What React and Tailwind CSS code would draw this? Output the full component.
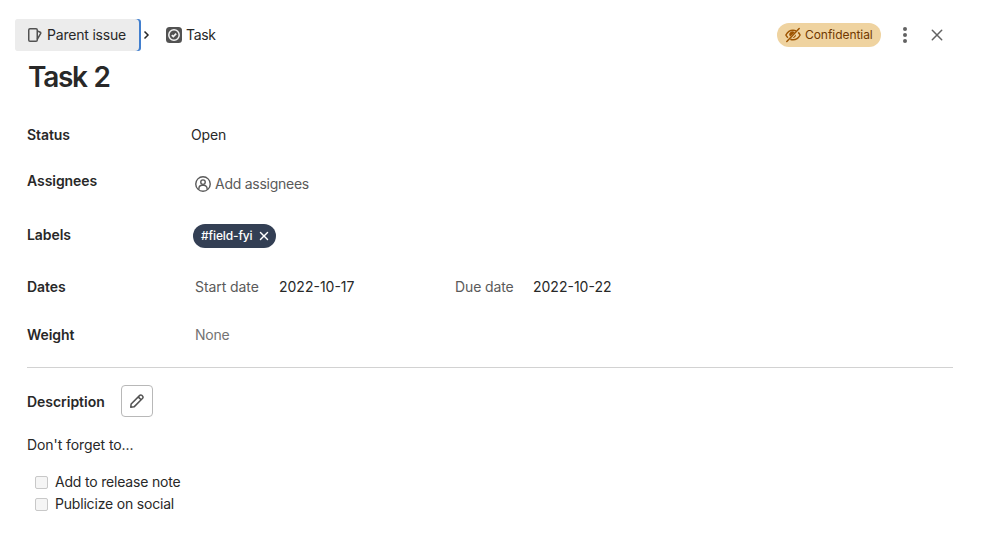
import React from 'react';

function Icon({ children, size = 16, className = '' }) {
  return (
    <svg
      width={size}
      height={size}
      viewBox="0 0 16 16"
      fill="none"
      stroke="currentColor"
      strokeWidth="1.5"
      className={`shrink-0 ${className}`}
      aria-hidden="true"
    >
      {children}
    </svg>
  );
}

function IssueIcon() {
  return (
    <Icon className="text-[#525252]">
      <rect x="1.75" y="1.75" width="8.5" height="12.5" rx="1.25" />
      <path d="M10.25 3.9l3 1.35a.9.9 0 0 1 .45 1.2L10.25 12.3" />
    </Icon>
  );
}

function TaskIcon() {
  return (
    <Icon className="text-[#f4f4f4]">
      <rect width="16" height="16" rx="3.5" fill="#525252" stroke="none" />
      <circle cx="8" cy="8" r="5.2" strokeWidth="1.5" />
      <path d="M5.8 8.2l1.5 1.4 2.9-3" strokeWidth="1.7" />
    </Icon>
  );
}

function EyeSlashIcon() {
  return (
    <Icon>
      <path d="M14.2 1.6L1.8 14.4" strokeLinecap="round" />
      <path d="M11 3.9C10.1 3.4 9.1 3.2 8 3.2 4.6 3.2 2.2 5.5 .9 8c.5 1 1.2 1.9 2 2.7M13.2 5.4c.8.8 1.4 1.7 1.9 2.6-1.3 2.5-3.7 4.8-7.1 4.8-1 0-1.9-.2-2.7-.5" />
      <path d="M5.2 9.6A3 3 0 0 1 9.6 5.4zM10.95 7.5A3 3 0 0 1 7.6 10.95z" fill="currentColor" stroke="none" />
    </Icon>
  );
}

function UserIcon() {
  return (
    <Icon>
      <circle cx="8" cy="8" r="7.25" strokeWidth="1.4" />
      <circle cx="8" cy="6.1" r="2.25" strokeWidth="1.4" />
      <path d="M3.9 13.6v-1.1a3.3 3.3 0 0 1 3.3-3.3h1.6a3.3 3.3 0 0 1 3.3 3.3v1.1" strokeWidth="1.4" />
    </Icon>
  );
}

function PencilIcon() {
  return (
    <Icon className="text-[#525252]">
      <path d="M1.75 14.25l.4-3.3 8.6-8.6a1.4 1.4 0 0 1 2 0l.9.9a1.4 1.4 0 0 1 0 2l-8.6 8.6zM9.2 3.9l2.9 2.9" strokeLinejoin="round" />
    </Icon>
  );
}

function Cross({ size, className, weight = 1.5 }) {
  return (
    <Icon size={size} className={className}>
      <path d="M3.3 3.3l9.4 9.4M12.7 3.3L3.3 12.7" strokeLinecap="round" strokeWidth={weight} />
    </Icon>
  );
}

function Row({ label, className, labelClass = '', children }) {
  return (
    <div className={`flex ${className}`}>
      <div className={`w-[164px] shrink-0 font-semibold tracking-[-0.06px] ${labelClass}`}>{label}</div>
      {children}
    </div>
  );
}

function Todo({ children }) {
  return (
    <li className="flex h-[22px] items-center gap-[7px]">
      <span className="size-[13px] rounded-[2px] border border-[#c8c8c8] bg-[#f5f5f5]" />
      <span className="tracking-[-0.19px]">{children}</span>
    </li>
  );
}

export default function App() {
  return (
    <main className="h-[544px] w-[982px] overflow-hidden bg-white pt-[19px] pr-[29px] pl-[27px] font-['Inter',sans-serif] text-sm leading-5 text-[#282828]">
      <header className="-ml-3 flex h-8 items-center">
        <div className="h-8 w-[126px] rounded-[3px] bg-[linear-gradient(90deg,#ececec_50%,#427fce_50%)]">
          <a className="flex h-8 w-[124px] items-center gap-1 rounded-[4px] bg-[#ececec] pl-3">
            <IssueIcon />
            <span className="whitespace-nowrap tracking-[-0.2px]">Parent issue</span>
          </a>
        </div>
        <svg width="8" height="10" viewBox="0 0 8 10" fill="none" stroke="#282828" strokeWidth="1.5" className="ml-[2px]">
          <path d="M1.5 1.5L5 5 1.5 8.5" />
        </svg>
        <div className="ml-[15px] flex items-center gap-1">
          <TaskIcon />
          <span className="tracking-[-0.3px]">Task</span>
        </div>
        <div className="ml-auto flex items-center">
          <span className="flex h-6 w-[104px] items-center gap-1 rounded-full bg-[#efd3a0] pl-2 text-xs text-[#703800]">
            <span className="text-[#9e5400]"><EyeSlashIcon /></span>
            <span className="tracking-[-0.05px]">Confidential</span>
          </span>
          <svg width="16" height="16" viewBox="0 0 16 16" fill="#626262" className="ml-4">
            <circle cx="8" cy="2" r="2" />
            <circle cx="8" cy="8" r="2" />
            <circle cx="8" cy="14" r="2" />
          </svg>
          <Cross size={16} className="mr-2 ml-4 text-[#626262]" />
        </div>
      </header>

      <h1 className="flex h-[52px] items-center pl-px text-[28px] font-semibold tracking-[-1.3px] [word-spacing:1px]">Task 2</h1>

      <Row label="Status" className="h-16 items-center">
        <span className="tracking-[-0.15px]">Open</span>
      </Row>
      <Row label="Assignees" className="h-10 items-start" labelClass="leading-7">
        <div className="flex h-[34px] items-center gap-1 pl-1 text-[#5a5a5a]">
          <UserIcon />
          <span className="tracking-[-0.26px]">Add assignees</span>
        </div>
      </Row>
      <Row label="Labels" className="h-14 items-center">
        <span className="mt-[2px] ml-[2px] flex h-6 w-[83px] items-center rounded-full bg-[#333f54] pl-2 text-xs font-medium text-white">
          <span className="tracking-[-0.13px]">#field-fyi</span>
          <Cross size={12} weight={1.9} className="mr-[6px] ml-auto" />
        </span>
      </Row>
      <Row label="Dates" className="h-12 items-center">
        <div className="flex pl-1">
          <span className="w-[84px] tracking-[-0.08px] text-[#5a5a5a]">Start date</span>
          <span className="w-[176px]">2022-10-17</span>
          <span className="w-[78px] tracking-[-0.12px] text-[#5a5a5a]">Due date</span>
          <span>2022-10-22</span>
        </div>
      </Row>
      <Row label="Weight" className="h-12 items-center">
        <span className="pl-1 tracking-[-0.25px] text-[#737373]">None</span>
      </Row>

      <hr className="mt-2 border-t border-[#d2d2d2]" />

      <section>
        <div className="mt-[17px] flex h-8 items-center">
          <h2 className="w-[94px] pt-px font-semibold tracking-[-0.03px]">Description</h2>
          <button className="flex size-8 items-center justify-center rounded-[4px] border border-[#b8b8b8]">
            <PencilIcon />
          </button>
        </div>
        <p className="mt-[18px] tracking-[-0.08px]">Don't forget to...</p>
        <ul className="mt-4 pl-2">
          <Todo>Add to release note</Todo>
          <Todo>Publicize on social</Todo>
        </ul>
      </section>
    </main>
  );
}
